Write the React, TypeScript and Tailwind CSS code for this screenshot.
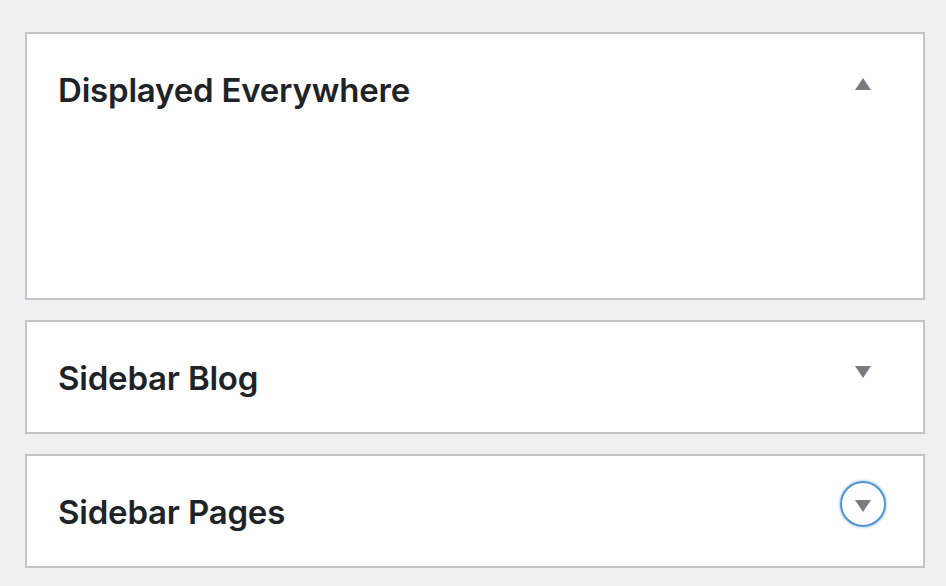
import React from "react";

function Tri({ up }: { up?: boolean }) {
  return (
    <svg width="16" height="12" viewBox="0 0 16 12" className="block">
      {up ? <polygon points="8,0 16,12 0,12" fill="#787c82" /> : <polygon points="0,0 16,0 8,12" fill="#787c82" />}
    </svg>
  );
}

function Panel({ title, up, focused, body }: { title: string; up?: boolean; focused?: boolean; body?: boolean }) {
  return (
    <div className="w-[900px] border-2 border-[#c3c4c7] bg-white">
      <div className="relative flex h-[110px] items-center pl-[31px] pr-[37px]">
        <h3 className="flex-1 text-[33px] font-semibold leading-none tracking-[-0.2px] text-[#1d2327] pt-[2px]">{title}</h3>
        <div className="-mt-[10px] flex h-[46px] w-[46px] items-center justify-center">
          {focused ? (
            <div className="-translate-y-[2px] flex h-[46px] w-[46px] items-center justify-center rounded-full border-2 border-[#4f94d4] shadow-[0_0_3px_rgba(34,113,177,0.6)]">
              <div className="translate-y-[2px]">
                <Tri />
              </div>
            </div>
          ) : (
            <Tri up={up} />
          )}
        </div>
      </div>
      {body && <div className="h-[154px]" />}
    </div>
  );
}

export default function App() {
  return (
    <div className="min-h-[586px] w-[946px] bg-[#f0f0f1] pl-[25px] pt-[32px]" style={{ fontFamily: "Inter, 'Noto Sans', sans-serif" }}>
      <div className="flex flex-col gap-[20px]">
        <Panel title="Displayed Everywhere" up body />
        <Panel title="Sidebar Blog" />
        <Panel title="Sidebar Pages" focused />
      </div>
    </div>
  );
}
